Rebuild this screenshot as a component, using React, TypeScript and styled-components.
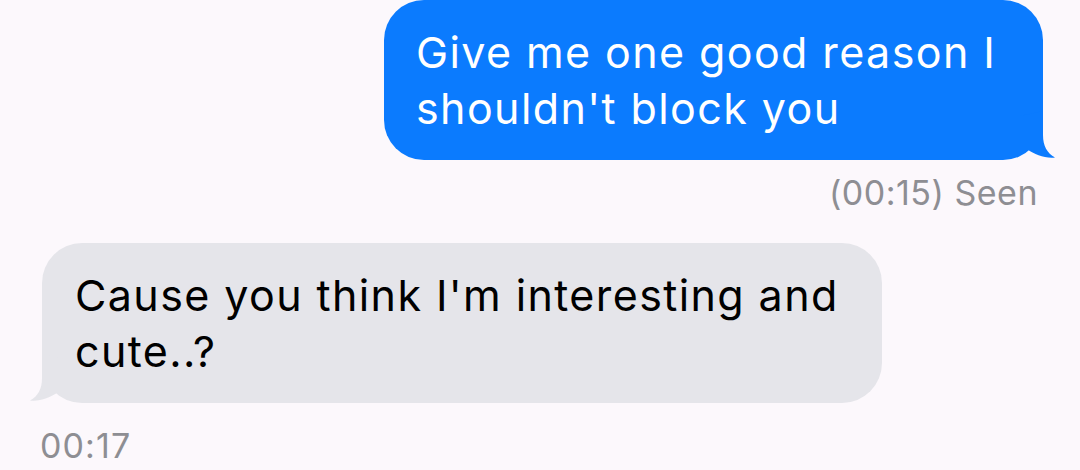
import React from "react";
import styled, { createGlobalStyle } from "styled-components";

const Global = createGlobalStyle`
  html, body { margin: 0; padding: 0; background: #fcf8fc; }
  body { font-family: Inter, "Noto Sans", sans-serif; -webkit-font-smoothing: antialiased; }
`;

const Page = styled.div`
  width: 1080px;
  height: 470px;
  overflow: hidden;
  background: #fcf8fc;
`;

const Thread = styled.div`
  display: flex;
  flex-direction: column;
`;

const Row = styled.div<{ $out?: boolean }>`
  display: flex;
  justify-content: ${(p) => (p.$out ? "flex-end" : "flex-start")};
  padding: ${(p) => (p.$out ? "0 37px 0 0" : "0 0 0 42px")};
  margin-top: ${(p) => (p.$out ? "0" : "30px")};
`;

const Bubble = styled.div<{ $out?: boolean; $w: number }>`
  position: relative;
  box-sizing: border-box;
  width: ${(p) => p.$w}px;
  padding: 24px 20px 24px ${(p) => (p.$out ? "32px" : "33px")};
  border-radius: 40px;
  background: ${(p) => (p.$out ? "#0b7bfe" : "#e5e5ea")};
  color: ${(p) => (p.$out ? "#ffffff" : "#000000")};
  font-size: 43px;
  letter-spacing: 1.4px;
  line-height: 56px;
  white-space: nowrap;
`;

const Tail = styled.svg<{ $out?: boolean }>`
  position: absolute;
  bottom: -1px;
  width: 45px;
  height: 50px;
  ${(p) => (p.$out ? "right: -17px;" : "left: -17px; transform: scaleX(-1);")}
`;

const Status = styled.div<{ $right?: boolean }>`
  color: #8e8e93;
  font-size: 34px;
  letter-spacing: ${(p) => (p.$right ? "0.5px" : "1.1px")};
  line-height: 40px;
  text-align: ${(p) => (p.$right ? "right" : "left")};
  padding: ${(p) => (p.$right ? "0 42px 0 0" : "0 0 0 40px")};
  margin-top: ${(p) => (p.$right ? "13px" : "23px")};
`;

const TailShape = ({ out, color }: { out?: boolean; color: string }) => (
  <Tail $out={out} viewBox="0 0 45 50" aria-hidden>
    <path
      d="M28 0 L28 24 C28 35 32 42 40 46.5 C30 47.5 20 44 12 38 L5 38 L5 5 Z"
      fill={color}
    />
  </Tail>
);

export default function App() {
  return (
    <Page>
      <Global />
      <Thread>
        <Row $out>
          <Bubble $out $w={659}>
            Give me one good reason I
            <br />
            shouldn't block you
            <TailShape out color="#0b7bfe" />
          </Bubble>
        </Row>
        <Status $right>(00:15) Seen</Status>
        <Row>
          <Bubble $w={840}>
            Cause you think I'm interesting and
            <br />
            cute..?
            <TailShape color="#e5e5ea" />
          </Bubble>
        </Row>
        <Status>00:17</Status>
      </Thread>
    </Page>
  );
}
